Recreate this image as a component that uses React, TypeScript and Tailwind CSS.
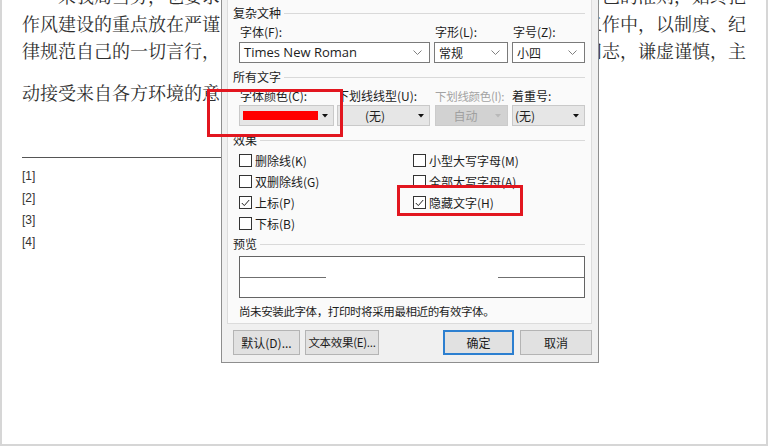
import React from "react";

const ui = "font-['Microsoft_YaHei_UI','Noto_Sans_CJK_SC',sans-serif]";

function Chevron() {
  return (
    <svg width="9" height="5" viewBox="0 0 9 5" className="shrink-0">
      <polyline points="0.5,0.5 4.5,4.5 8.5,0.5" fill="none" stroke="#808080" strokeWidth="1" />
    </svg>
  );
}

function Tri({ color = "#111" }: { color?: string }) {
  return (
    <svg width="6" height="4" viewBox="0 0 6 4" className="shrink-0">
      <polygon points="0,0 6,0 3,3.5" fill={color} />
    </svg>
  );
}

function Heading({ children, className = "" }: { children: React.ReactNode; className?: string }) {
  return (
    <div className={`flex h-4 items-center ${className}`}>
      <span className="leading-4">{children}</span>
      <div className="ml-[3px] h-px flex-1 bg-[#d9d9d9]" />
    </div>
  );
}

function Check({ label, checked = false }: { label: string; checked?: boolean }) {
  return (
    <div className="flex h-[21px] items-center">
      <div className="flex h-[13px] w-[13px] items-center justify-center border border-[#333] bg-white">
        {checked && (
          <svg width="9" height="8" viewBox="0 0 9 8">
            <polyline points="0.8,4 3.3,6.6 8.2,1" fill="none" stroke="#222" strokeWidth="1" />
          </svg>
        )}
      </div>
      <span className="ml-[3px] whitespace-nowrap leading-4">{label}</span>
    </div>
  );
}

function Button({ children, primary = false, className = "" }: { children: React.ReactNode; primary?: boolean; className?: string }) {
  return (
    <div
      className={`flex h-[25px] items-center justify-center whitespace-nowrap bg-[#e1e1e1] ${
        primary ? "border-2 border-[#2c7fd0]" : "border border-[#b4b4b4]"
      } ${className}`}
    >
      {children}
    </div>
  );
}

export default function App() {
  return (
    <div className="relative h-[446px] w-[768px] overflow-hidden border-x-2 border-b-2 border-[#d6d6d6] bg-white">
      {/* document body */}
      <div className="mt-[-18px] px-[20px] font-['Noto_Serif_CJK_SC','Noto_Sans_CJK_SC',serif] text-[18px] leading-[27.5px] text-[#2e2e2e]">
        <div className="flex justify-between">
          <span>　一来我局当务，也要求</span>
          <span>自己的准则，始终把</span>
        </div>
        <div className="flex justify-between">
          <span>作风建设的重点放在严谨</span>
          <span>工作中，以制度、纪</span>
        </div>
        <div className="flex justify-between">
          <span>律规范自己的一切言行，</span>
          <span>同志，谦虚谨慎，主</span>
        </div>
        <div className="mt-[14px] flex">
          <span>动接受来自各方环境的意</span>
        </div>
      </div>

      {/* footnotes */}
      <div className="ml-[20px] mt-[51px] h-px w-[260px] bg-[#555]" />
      <div className="ml-[20px] mt-[7px] font-['Liberation_Sans',sans-serif] text-[12px] leading-[22px] text-[#333]">
        <div>[1]</div>
        <div>[2]</div>
        <div>[3]</div>
        <div>[4]</div>
      </div>

      {/* font dialog */}
      <div className={`absolute left-[219px] top-[-1px] h-[364px] w-[378px] border border-[#8e8e8e] bg-[#f0f0f0] text-[12px] text-[#1c1c1c] ${ui}`}>
        <div className="ml-[5px] h-[324px] w-[365px] border-x border-b border-[#dcdcdc] bg-[#fafafa] pl-[5px] pr-[6px] pt-[5px]">
          <Heading>复杂文种</Heading>

          <div className="ml-[6px] mt-[3px] flex gap-[4px]">
            <div className="flex w-[191px] flex-col">
              <span className="h-4 pl-px leading-4">字体(F):</span>
              <div className="mt-[2px] flex h-[21px] items-center justify-between border border-[#7a7a7a] bg-white pl-[4px] pr-[7px] font-['Open_Sans','Noto_Sans_CJK_SC',sans-serif] text-[13px]">
                <span>Times New Roman</span>
                <Chevron />
              </div>
            </div>
            <div className="flex w-[74px] flex-col">
              <span className="h-4 pl-px leading-4">字形(L):</span>
              <div className="mt-[2px] flex h-[21px] items-center justify-between border border-[#7a7a7a] bg-white pl-[4px] pr-[7px]">
                <span>常规</span>
                <Chevron />
              </div>
            </div>
            <div className="flex w-[73px] flex-col">
              <span className="h-4 pl-px leading-4">字号(Z):</span>
              <div className="mt-[2px] flex h-[21px] items-center justify-between border border-[#7a7a7a] bg-white pl-[4px] pr-[7px]">
                <span>小四</span>
                <Chevron />
              </div>
            </div>
          </div>

          <Heading className="mt-[6px]">所有文字</Heading>

          <div className="ml-[6px] mt-[3px] flex">
            <div className="flex w-[95px] flex-col">
              <span className="h-4 whitespace-nowrap pl-px leading-4">字体颜色(C):</span>
              <div className="mt-px flex h-[21px] items-center border border-[#c9c9c9] bg-[#e6e6e6] pl-[3px] pr-[5px]">
                <div className="h-[9px] w-[75px] bg-[#ff0000]" />
                <div className="flex flex-1 justify-end">
                  <Tri />
                </div>
              </div>
            </div>
            <div className="ml-[3px] flex w-[93px] flex-col">
              <span className="h-4 whitespace-nowrap leading-4">下划线线型(U):</span>
              <div className="mt-px flex h-[21px] items-center border border-[#c9c9c9] bg-[#e6e6e6] pr-[5px]">
                <span className="flex-1 pr-[6px] text-center">(无)</span>
                <Tri />
              </div>
            </div>
            <div className="ml-[5px] flex w-[73px] flex-col">
              <span className="h-4 whitespace-nowrap text-[11.5px] leading-4 tracking-[-0.3px] text-[#a3a3a3]">下划线颜色(I):</span>
              <div className="mt-px flex h-[21px] items-center border border-[#cbcbcb] bg-[#d2d2d2] pr-[6px] text-[#a0a0a0]">
                <span className="flex-1 text-center">自动</span>
                <Tri color="#b9b9b9" />
              </div>
            </div>
            <div className="ml-[4px] flex w-[73px] flex-col">
              <span className="h-4 whitespace-nowrap leading-4">着重号:</span>
              <div className="mt-px flex h-[21px] items-center justify-between border border-[#c9c9c9] bg-[#e6e6e6] pl-[2px] pr-[5px]">
                <span>(无)</span>
                <Tri />
              </div>
            </div>
          </div>

          <Heading className="mt-[6px]">效果</Heading>

          <div className="ml-[6px] mt-[2px] grid grid-cols-[174px_1fr]">
            <Check label="删除线(K)" />
            <Check label="小型大写字母(M)" />
            <Check label="双删除线(G)" />
            <Check label="全部大写字母(A)" />
            <Check label="上标(P)" checked />
            <Check label="隐藏文字(H)" checked />
            <Check label="下标(B)" />
            <div />
          </div>

          <Heading className="mt-[2px]">预览</Heading>

          <div className="ml-[6px] mt-[4px] flex h-[42px] items-center justify-between border border-[#646464] bg-white">
            <div className="h-px w-[86px] bg-[#6f6f6f]" />
            <div className="h-px w-[86px] bg-[#6f6f6f]" />
          </div>

          <div className="ml-[6px] mt-[5px] whitespace-nowrap text-[11.5px] leading-4 tracking-[-0.4px]">
            尚未安装此字体，打印时将采用最相近的有效字体。
          </div>
        </div>

        <div className="ml-[11px] mt-[6px] flex">
          <Button className="w-[67px]">默认(D)...</Button>
          <Button className="ml-[5px] w-[74px] text-[11.5px] tracking-[-0.3px]">文本效果(E)...</Button>
          <Button primary className="ml-[64px] w-[71px]">确定</Button>
          <Button className="ml-[6px] w-[72px]">取消</Button>
        </div>
      </div>

      {/* red callout frames */}
      <div className="absolute left-[205px] top-[89px] h-[48px] w-[136px] border-[3px] border-[#e2161f]" />
      <div className="absolute left-[395px] top-[185px] h-[31px] w-[126px] border-[3px] border-[#e2161f]" />
    </div>
  );
}
